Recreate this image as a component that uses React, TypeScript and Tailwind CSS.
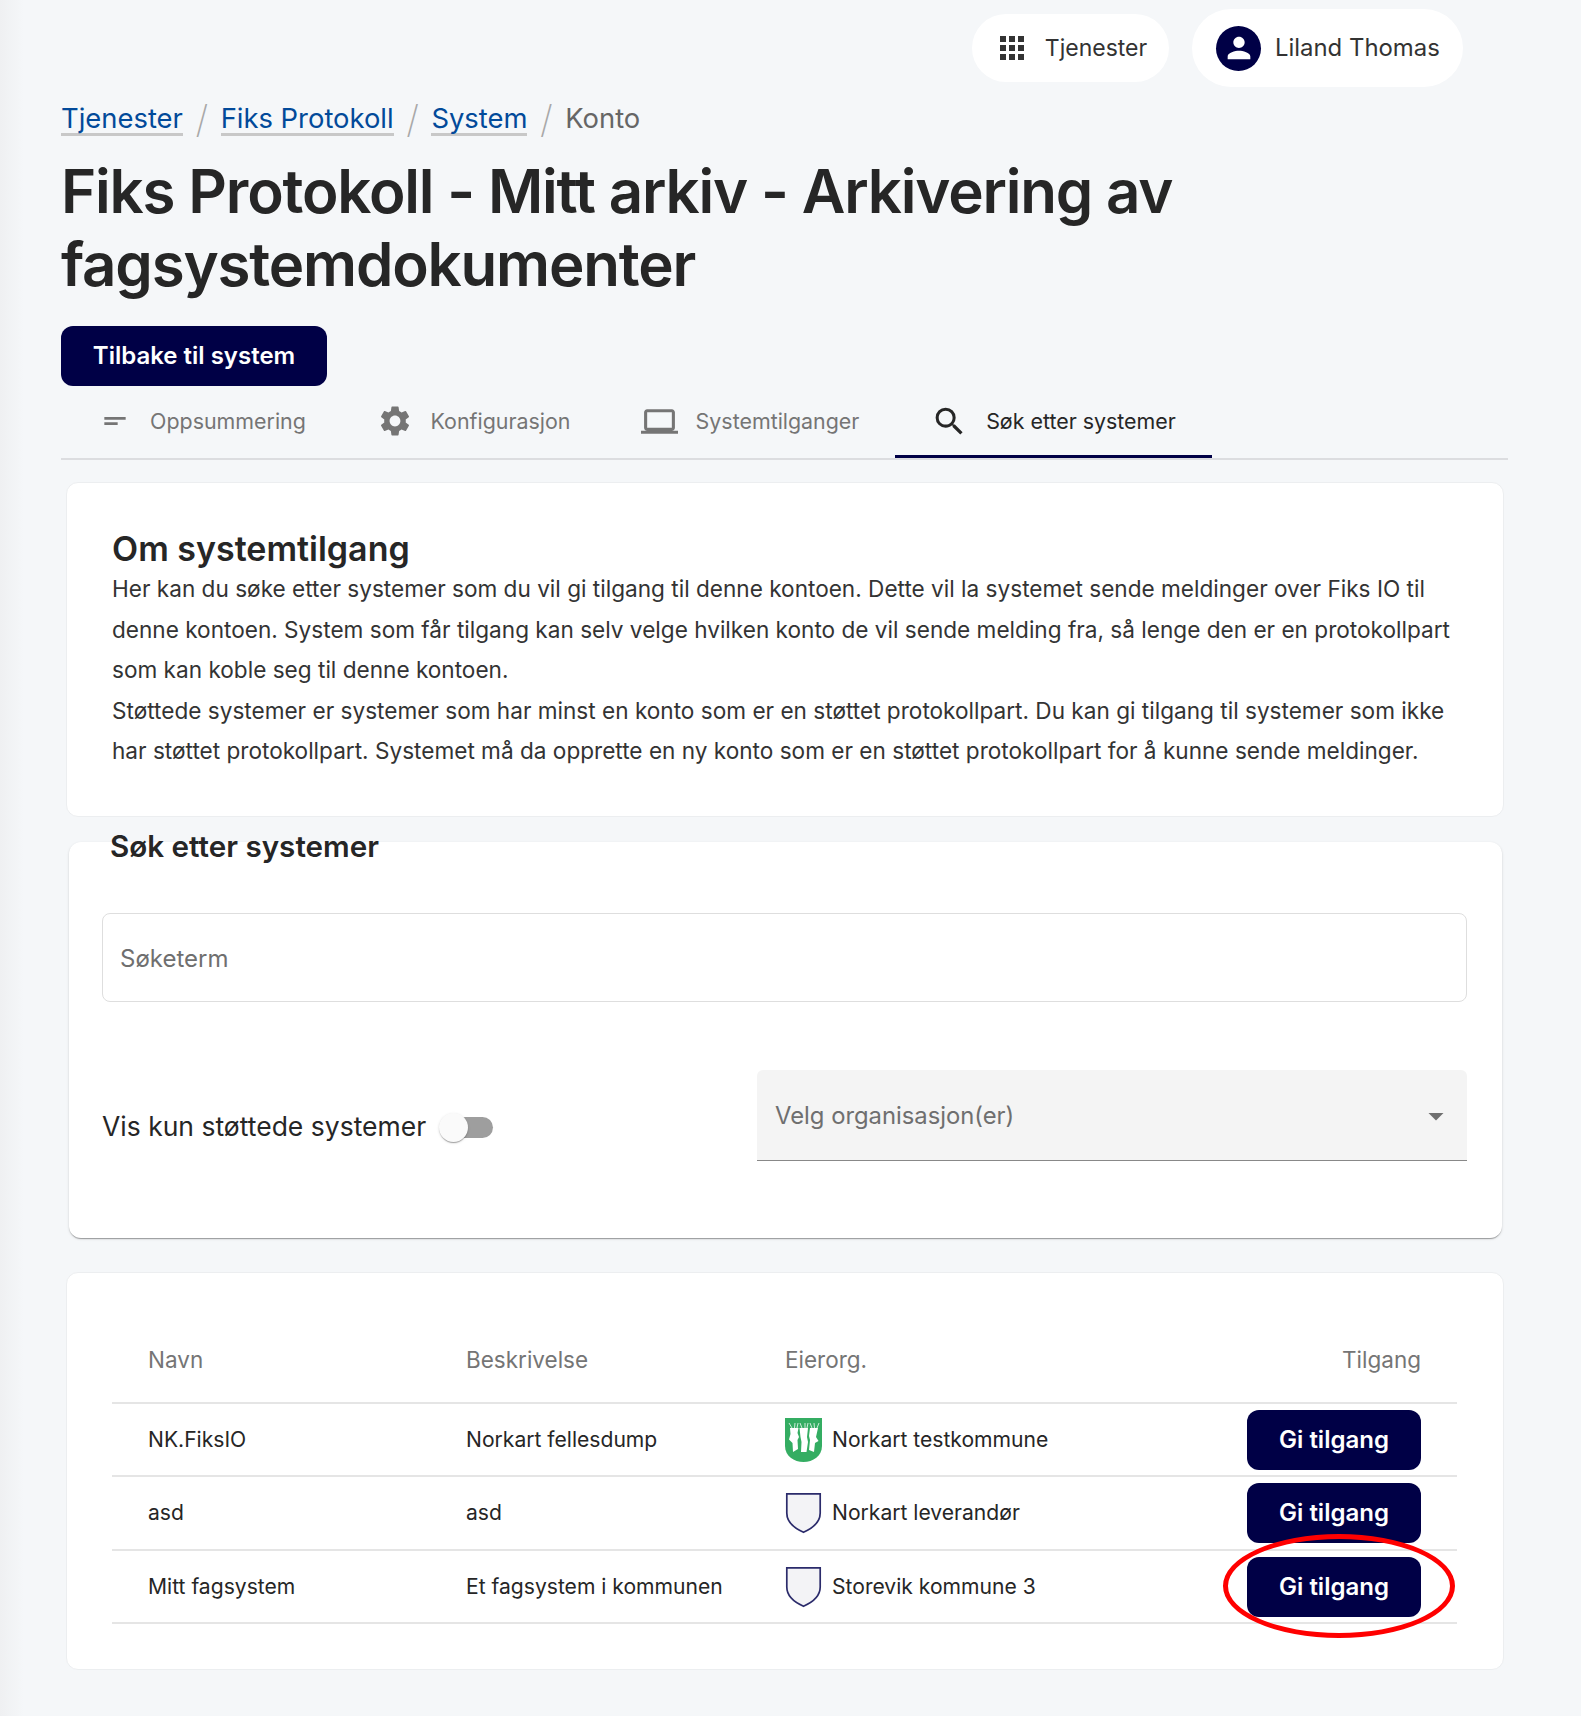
import React from "react";
import { MdApps, MdSettings, MdLaptop, MdSearch, MdPerson, MdShortText, MdArrowDropDown } from "react-icons/md";

const navy = "bg-[#000046]";

function Crumb({ children }: { children: React.ReactNode }) {
  return <a className="text-[#024A9A] border-b-[3px] border-[#c8c8c8] leading-[30px] h-[33px] block">{children}</a>;
}
function Sep() {
  return <span className="text-[#a8a8a8] mx-[12.5px] font-extralight text-[38px] leading-[30px]">/</span>;
}
function Tab({ icon, label, active, cls }: { icon: React.ReactNode; label: string; active?: boolean; cls: string }) {
  return (
    <div className={`${cls} h-[72px] flex items-center justify-center text-[21.4px] ${active ? "text-[#262626] border-b-[3px] border-[#000046] pt-[1px]" : "text-[#757575] pb-[2px]"}`}>
      {icon}
      <span>{label}</span>
    </div>
  );
}
function Shield() {
  return (
    <svg width="37" height="42" viewBox="0 0 37 42" className="shrink-0">
      <path d="M1.8 1.8 H35.2 V21 C35.2 30 27 36.5 18.5 40.2 C10 36.5 1.8 30 1.8 21 Z" fill="#f3f3f6" stroke="#2b2b6b" strokeWidth="1.7" />
    </svg>
  );
}
function GreenShield() {
  return (
    <svg width="37" height="44" viewBox="0 0 37 44" className="shrink-0">
      <path d="M0 0 H37 V28 C37 38 28 44 18.5 44 C9 44 0 38 0 28 Z" fill="#34ad62" />
      <path d="M4 5 L7 10 M10 5 L9.5 10 M13 5 L12 10 M15 5 L17 10 M20 5 L20 10 M23 5 L22 10 M25 5 L27 10 M29 5 L29.5 10 M34 5 L32 10" stroke="#fff" strokeWidth="0.9" fill="none" opacity="0.85" />
      <path d="M5 10 H13.5 L12.5 15 L14 19 L12.5 22 L13 31 L8 34 L7.5 25 L4 21.5 L5.5 16 Z" fill="#fff" />
      <path d="M14.5 10 H23 L22 19 L23 24 L21.5 34 H16 L16.5 24 L15.5 19 Z" fill="#fff" />
      <path d="M25 10 H33 L31 19 L33.5 23 L30 25 L29 34 L24 32 L25 22 L24 18 Z" fill="#fff" />
    </svg>
  );
}
function GiButton() {
  return (
    <button className={`${navy} text-white w-[174px] h-[60px] rounded-[12px] text-[24px] font-semibold`}>Gi tilgang</button>
  );
}
function Row({ a, b, logo, c, h }: { a: string; b: string; logo: React.ReactNode; c: string; h: string }) {
  return (
    <tr className={`border-b-2 border-[#e5e5e5] ${h} text-[21.1px] text-[#262626]`}>
      <td className="pl-[36px]">{a}</td>
      <td className="pl-[36px]">{b}</td>
      <td className="pl-[37px]">
        <div className="flex items-center gap-[10px]">
          {logo}
          <span>{c}</span>
        </div>
      </td>
      <td className="pr-[36px]">
        <div className="flex justify-end">
          <GiButton />
        </div>
      </td>
    </tr>
  );
}

export default function App() {
  return (
    <div className="relative min-h-[1716px] bg-[#f5f7f9] pl-[61px] pr-[73px] font-['Inter',sans-serif] text-[#262626] overflow-hidden">
      <div className="absolute left-0 top-0 bottom-0 w-[24px] bg-gradient-to-r from-[#eff0f2] to-[#f5f7f9]" />
      <header className="flex justify-end items-center gap-[23px] h-[96px] pr-[45px]">
        <div className="bg-white rounded-full h-[68px] w-[197px] flex items-center justify-center gap-[15px] text-[23px] text-[#333]">
          <MdApps size={36} className="text-[#333]" />
          <span>Tjenester</span>
        </div>
        <div className="bg-white rounded-full h-[78px] w-[271px] flex items-center pl-[24px] gap-[14px] text-[23.9px] text-[#333]">
          <span className={`${navy} rounded-full w-[45px] h-[45px] flex items-center justify-center`}>
            <MdPerson size={34} className="text-white" />
          </span>
          <span>Liland Thomas</span>
        </div>
      </header>

      <nav className="flex items-center text-[27.4px] h-[36px] mt-[5px]">
        <Crumb>Tjenester</Crumb>
        <Sep />
        <Crumb>Fiks Protokoll</Crumb>
        <Sep />
        <Crumb>System</Crumb>
        <Sep />
        <span className="text-[#666] leading-[30px] h-[33px]">Konto</span>
      </nav>

      <h1 className="text-[60px] leading-[73px] font-semibold tracking-[-1.18px] mt-[18px] max-w-[1200px]">
        Fiks Protokoll - Mitt arkiv - Arkivering av fagsystemdokumenter
      </h1>

      <button className={`${navy} text-white h-[60px] w-[266px] rounded-[12px] text-[24px] font-semibold mt-[25px] block`}>
        Tilbake til system
      </button>

      <div className="flex border-b-2 border-[#dcdde0] h-[74px]">
        <Tab cls="w-[279px] pl-[4px] gap-[19px]" icon={<MdShortText size={32} className="text-[#757575]" />} label="Oppsummering" />
        <Tab cls="w-[272px] pr-[5px] gap-[18px]" icon={<MdSettings size={36} className="text-[#757575]" />} label="Konfigurasjon" />
        <Tab cls="w-[283px] pr-[7px] gap-[18px]" icon={<MdLaptop size={37} className="text-[#757575]" />} label="Systemtilganger" />
        <Tab cls="w-[317px] gap-[18px]" active icon={<MdSearch size={37} className="text-[#262626]" />} label="Søk etter systemer" />
      </div>

      <section className="mt-[22px] mx-[5px] w-[1438px] h-[335px] bg-white border border-[#eceef0] rounded-[12px] pl-[45px] pr-[40px] pt-[47px]">
        <h2 className="text-[34px] leading-[38px] font-semibold">Om systemtilgang</h2>
        <p className="text-[22.6px] leading-[40.5px] text-[#333] mt-[1px]">
          Her kan du søke etter systemer som du vil gi tilgang til denne kontoen. Dette vil la systemet sende meldinger over Fiks IO til denne kontoen. System som får tilgang kan selv velge hvilken konto de vil sende melding fra, så lenge den er en protokollpart som kan koble seg til denne kontoen.
          <br />
          Støttede systemer er systemer som har minst en konto som er en støttet protokollpart. Du kan gi tilgang til systemer som ikke har støttet protokollpart. Systemet må da opprette en ny konto som er en støttet protokollpart for å kunne sende meldinger.
        </p>
      </section>

      <section className="mt-[25px] ml-[8px] w-[1433px] h-[396px] bg-white rounded-[12px] shadow-[0_2px_1px_-1px_rgba(0,0,0,0.2),0_1px_1px_0_rgba(0,0,0,0.14),0_1px_3px_0_rgba(0,0,0,0.12)] pl-[33px] pr-[35px]">
        <h2 className="text-[29.6px] leading-[36px] font-semibold pl-[8px] relative -top-[14px]">Søk etter systemer</h2>
        <div className="mt-[35px] h-[89px] border border-[#dedede] rounded-[8px] flex items-center pl-[17px] pt-[2px] text-[24px] text-[#6f6f6f]">Søketerm</div>
        <div className="flex mt-[68px] justify-between">
          <div className="flex items-center h-[91px] pt-[22px] text-[26.5px] text-[#262626]">
            <span>Vis kun støttede systemer</span>
            <span className="relative ml-[13px] block w-[54px] h-[21px] top-[1px]">
              <span className="absolute right-0 top-0 h-[21px] w-[46px] rounded-full bg-[#9e9e9e]" />
              <span className="absolute left-0 -top-[4px] h-[29px] w-[29px] rounded-full bg-[#fafafa] shadow-[0_2px_1px_-1px_rgba(0,0,0,0.2),0_1px_1px_0_rgba(0,0,0,0.14),0_1px_3px_0_rgba(0,0,0,0.12)]" />
            </span>
          </div>
          <div className="w-[710px] h-[91px] bg-[#f4f4f4] rounded-t-[6px] border-b border-[#888888] flex items-center justify-between pl-[18px] pr-[13px] pt-[2px] text-[23.8px] text-[#6f6f6f]">
            <span>Velg organisasjon(er)</span>
            <MdArrowDropDown size={36} className="text-[#6f6f6f]" />
          </div>
        </div>
      </section>

      <section className="relative mt-[34px] mx-[5px] w-[1438px] h-[398px] bg-white border border-[#eceef0] rounded-[12px] pl-[45px] pt-[43px]">
        <table className="w-[1345px] table-fixed border-collapse">
          <colgroup>
            <col className="w-[318px]" />
            <col className="w-[318px]" />
            <col className="w-[318px]" />
            <col className="w-[391px]" />
          </colgroup>
          <thead>
            <tr className="border-b-2 border-[#e5e5e5] h-[87px] text-[22.5px] text-[#757575]">
              <th className="pl-[36px] pt-[1px] text-left font-normal">Navn</th>
              <th className="pl-[36px] pt-[1px] text-left font-normal">Beskrivelse</th>
              <th className="pl-[37px] pt-[1px] text-left font-normal">Eierorg.</th>
              <th className="pr-[36px] pt-[1px] text-right font-normal">Tilgang</th>
            </tr>
          </thead>
          <tbody>
            <Row h="h-[73px]" a="NK.FiksIO" b="Norkart fellesdump" logo={<GreenShield />} c="Norkart testkommune" />
            <Row h="h-[74px]" a="asd" b="asd" logo={<Shield />} c="Norkart leverandør" />
            <Row h="h-[73px]" a="Mitt fagsystem" b="Et fagsystem i kommunen" logo={<Shield />} c="Storevik kommune 3" />
          </tbody>
        </table>
        <div className="absolute left-[1156px] top-[261px] w-[232px] h-[104px] rounded-[50%] border-[5px] border-[#ff0000]" />
      </section>
    </div>
  );
}
